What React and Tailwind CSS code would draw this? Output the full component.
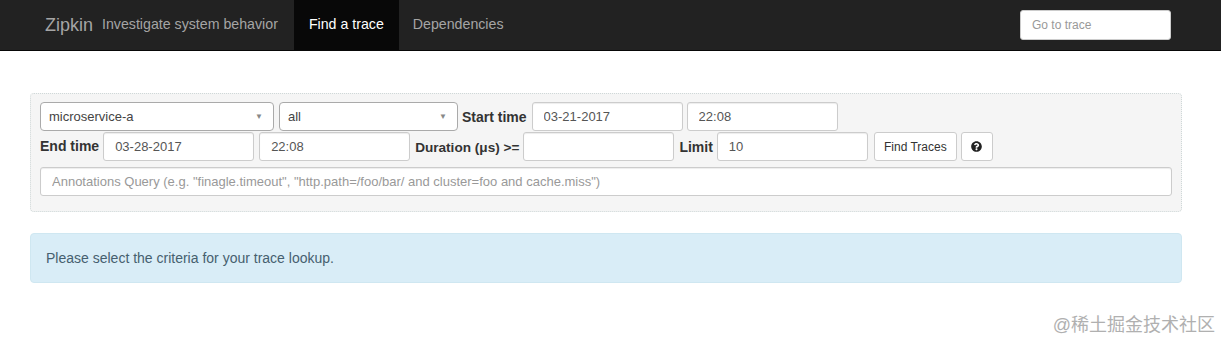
import React from 'react';
import { FaQuestionCircle } from 'react-icons/fa';

const font = { fontFamily: '"Liberation Sans", Arial, sans-serif' };

function TextInput({ value, placeholder, className = 'w-[151px]' }) {
  return (
    <input
      readOnly
      value={value}
      placeholder={placeholder}
      className={`h-[29px] rounded-[3px] border border-[#ccc] bg-white px-[11px] text-[13px] text-[#555] placeholder:text-[#999] shadow-[inset_0_1px_1px_rgba(0,0,0,0.075)] outline-none ${className}`}
    />
  );
}

function Select({ value, className }) {
  return (
    <div
      className={`flex h-[29px] items-center justify-between rounded-[4px] border border-[#aaa] bg-white pl-[8px] pr-[10px] text-[13px] text-[#444] ${className}`}
    >
      <span>{value}</span>
      <span className="text-[8px] text-[#888]">▼</span>
    </div>
  );
}

function Label({ children, className = 'text-[14px]' }) {
  return <span className={`font-bold text-[#333] ${className}`}>{children}</span>;
}

export default function App() {
  return (
    <div className="min-h-[341px] bg-white" style={font}>
      {/* Top navbar */}
      <nav className="flex h-[51px] items-center bg-[#222] border-b border-[#080808]">
        <span className="ml-[45px] text-[18px] text-[#a5a5a5]">Zipkin</span>
        <span className="ml-[9px] text-[14.2px] text-[#a5a5a5]">Investigate system behavior</span>
        <div className="ml-[16px] flex h-full items-center bg-[#080808] px-[15px] text-[14.2px] text-white">
          Find a trace
        </div>
        <div className="flex h-full items-center px-[14px] text-[14.2px] text-[#a5a5a5]">Dependencies</div>
        <div className="ml-auto mr-[50px]">
          <input
            readOnly
            placeholder="Go to trace"
            className="h-[30px] w-[151px] rounded-[3px] border border-[#ccc] bg-white px-[11px] text-[12px] placeholder:text-[#999] outline-none"
          />
        </div>
      </nav>

      {/* Search form */}
      <div className="ml-[30px] mt-[42px] w-[1152px] rounded-[4px] border border-dotted border-[#cfd8d8] bg-[#f5f5f5] pl-[9px] pr-[10px] pt-[8px] pb-[15px]">
        <div className="flex items-center">
          <Select value="microservice-a" className="w-[234px]" />
          <Select value="all" className="ml-[5px] w-[179px]" />
          <span className="ml-[4px]"><Label>Start time</Label></span>
          <TextInput value="03-21-2017" className="ml-[5px] w-[151px]" />
          <TextInput value="22:08" className="ml-[4px] w-[151px]" />
        </div>
        <div className="mt-[1px] flex items-center">
          <Label>End time</Label>
          <TextInput value="03-28-2017" className="ml-[4px] w-[151px]" />
          <TextInput value="22:08" className="ml-[5px] w-[151px]" />
          <span className="ml-[5px]"><Label className="text-[13.6px]">Duration (μs) &gt;=</Label></span>
          <TextInput value="" className="ml-[4px] w-[151px]" />
          <span className="ml-[5px]"><Label>Limit</Label></span>
          <TextInput value="10" className="ml-[4px] w-[151px]" />
          <button className="ml-[6px] h-[29px] w-[83px] rounded-[3px] border border-[#ccc] bg-white text-[12px] text-[#333]">
            Find Traces
          </button>
          <button className="ml-[4px] flex h-[29px] w-[32px] items-center justify-center rounded-[3px] border border-[#ccc] bg-white text-[#222]">
            <FaQuestionCircle className="h-[11px] w-[11px]" />
          </button>
        </div>
        <div className="mt-[6px]">
          <TextInput
            value=""
            placeholder={'Annotations Query (e.g. "finagle.timeout", "http.path=/foo/bar/ and cluster=foo and cache.miss")'}
            className="w-[1132px] text-[12px]"
          />
        </div>
      </div>

      {/* Info alert */}
      <div className="ml-[30px] mt-[21px] flex h-[50px] w-[1152px] items-center rounded-[4px] border border-[#cfe7f1] bg-[#d9edf7] px-[15px] text-[14px] text-[#46606f]">
        Please select the criteria for your trace lookup.
      </div>

      {/* Watermark */}
      <div className="mt-[29px] flex justify-end pr-[6px]">
        <span
          className="text-[18px] text-[#b0b0b0]"
          style={{ fontFamily: '"Liberation Sans", "Noto Sans CJK SC", sans-serif' }}
        >
          @稀土掘金技术社区
        </span>
      </div>
    </div>
  );
}
